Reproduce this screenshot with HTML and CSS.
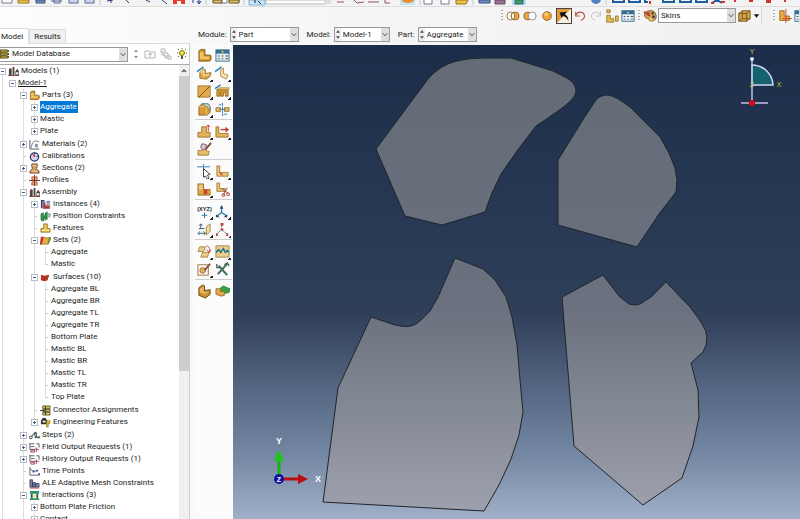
FILE: index.html
```html
<!DOCTYPE html>
<html lang="en">
<head>
<meta charset="UTF-8">
<meta name="viewport" content="width=device-width, initial-scale=1.0">
<title>Model Database</title>
<link rel="stylesheet" href="styles.css">
</head>
<body>
<!-- shared icons -->
<svg class="sprite" aria-hidden="true">
    <symbol id="down" viewBox="0 0 8 14"><path d="M1.500 5.500l2.500 3 2.500-3" fill="none" stroke="#555"/></symbol>
    <symbol id="spin" viewBox="0 0 6 14"><path d="M1 5l2-2.500L5 5zM1 9l2 2.500L5 9z" fill="#444"/></symbol>
    <symbol id="part" viewBox="0 0 16 16"><path d="M2 3l2-1.500h4.500v6H14l1 1v4L13 14H2z" fill="#c98c22" stroke="#75500f" stroke-width=".8"/><path d="M3 4h4v5h6v3H3z" fill="#f0c468"/></symbol>
    <symbol id="table" viewBox="0 0 16 16"><rect x="1" y="2" width="14" height="12" fill="#e9f1f6" stroke="#34698c"/><path d="M1 2h14v4H1z" fill="#2f7097"/><path d="M3 8h2v1H3zm4 0h2v1H7zm4 0h3v1h-3zM3 11h2v1H3zm4 0h2v1H7zm4 0h3v1h-3z" fill="#455"/><path d="M7 3h2v2H7z" fill="#f4c14d"/></symbol>
    <symbol id="towers" viewBox="0 0 12 12"><path d="M1 11V3h3v8zM5 11V1h2v10zM8 11V6l2-3 2 3v5z" fill="#4a4442"/><path d="M1 4l2-2 1 3zM0 10h12v1H0z" fill="#a33a32"/><circle cx="10" cy="8" r="1.500" fill="#dfe6dc"/></symbol>
    <symbol id="material" viewBox="0 0 12 12"><path d="M1 1v10h10" fill="none" stroke="#456"/><path d="M2 10l2-6 3-2 4 1" fill="none" stroke="#777"/><path d="M7 5l3 1-1 4-3-2z" fill="#8294a8"/></symbol>
    <symbol id="gauge" viewBox="0 0 12 12"><circle cx="6" cy="6.500" r="4.500" fill="#d8d6f2" stroke="#332e70" stroke-width="1.400"/><path d="M6 7L3 3l4 2z" fill="#c02828"/><path d="M6 1v3M8 6h2" stroke="#1c6c70"/></symbol>
    <symbol id="section" viewBox="0 0 12 12"><path d="M3 1h6v3L8 6l3 3v2H1V9l3-3-1-2z" fill="#cd9e61" stroke="#7e4b27"/><path d="M4 3h4M3 9h6" stroke="#f1d6a5"/></symbol>
    <symbol id="profile" viewBox="0 0 12 12"><path d="M3 2h6v3H8v3h1v3H3V8h1V5H3z" fill="#eb9974" stroke="#a24d34" stroke-width=".7"/><path d="M0 6h12M6 0v12" stroke="#6b3427"/></symbol>
    <symbol id="instances" viewBox="0 0 12 12"><path d="M1 1h4v5h6v4H1z" fill="#27457d"/><path d="M3 3h3v4h5v4H3z" fill="#b03a3a" stroke="#fff" stroke-width=".5"/><path d="M7 2h4v3H7z" fill="#7694c0"/></symbol>
    <symbol id="position" viewBox="0 0 12 12"><path d="M1 10V3l3-1v6l2-6 2-1v8L6 10V6l-2 5z" fill="#2b9149" stroke="#17592c" stroke-width=".5"/><path d="M9 2l3 1-1 4H9z" fill="#8ca9b0"/></symbol>
    <symbol id="feature" viewBox="0 0 12 12"><path d="M4 1h4v5h3v4H1V6h3z" fill="#e9c95c" stroke="#816317" stroke-width=".8"/><path d="M2 8h8" stroke="#fff2ae"/></symbol>
    <symbol id="set" viewBox="0 0 12 12"><path d="M3 3h9l-3 7H0z" fill="#e8ad46" stroke="#925c18" stroke-width=".7"/><path d="M1 2h3l-2 8H0z" fill="#c22b22"/><path d="M10 2l2 1-3 7H8z" fill="#489c42"/></symbol>
    <symbol id="surface" viewBox="0 0 12 12"><path d="M1 3l4 1 5-1-2 6-3 1-4-1z" fill="#c02b20"/><path d="M7 4l3-1-2 6H6z" fill="#8c4b24"/></symbol>
    <symbol id="connector" viewBox="0 0 12 12"><path d="M3 1h8v3H3zM3 5h8v2H3zM3 8h8v3H3z" fill="#d2c55d" stroke="#45401d" stroke-width=".8"/><path d="M0 6h5M6 1v10" stroke="#333"/></symbol>
    <symbol id="engineering" viewBox="0 0 12 12"><path d="M1 8V4l2-3h3l2 3v4z" fill="#333"/><path d="M3 4h3v2H3z" fill="#eee"/><path d="M7 4h4v3H9v4H7z" fill="#dfbb26" stroke="#655617" stroke-width=".5"/></symbol>
    <symbol id="steps" viewBox="0 0 12 12"><circle cx="2" cy="8" r="1.500" fill="#fff" stroke="#333"/><path d="M3 7l3-4h2v5h4M6 3l1 6" fill="none" stroke="#333"/><circle cx="7" cy="3" r="1" fill="#2f7a55"/><path d="M8 7h4v2H8z" fill="#357a58"/></symbol>
    <symbol id="output" viewBox="0 0 12 12"><path d="M1 1v7h6M1 2h5M2 5h4M8 2h3v4" fill="none" stroke="#50545c"/><path d="M2 9h4v2H2zM7 8h4M8 6v5" fill="none" stroke="#a54149"/></symbol>
    <symbol id="times" viewBox="0 0 12 12"><path d="M1 1v9h10M1 3l4 3 4-1" fill="none" stroke="#555b68"/><path d="M4 5h2v2H4zM8 4h2v2H8zM10 8h2v2h-2z" fill="#36559b"/></symbol>
    <symbol id="ale" viewBox="0 0 12 12"><path d="M1 2h3v8H1zM4 5h3v5H4zM7 6h4v4H7z" fill="#7682a3" stroke="#343a58" stroke-width=".8"/><path d="M1 11h10" stroke="#b34950"/></symbol>
    <symbol id="interaction" viewBox="0 0 12 12"><path d="M1 1h10v3H1zM1 9h10v2H1z" fill="#2b8f69"/><path d="M3 4v5M9 4v5" stroke="#2e5d52" stroke-width="2"/><path d="M5 5h2v3H5z" fill="#ead45e"/></symbol>
    <symbol id="cube" viewBox="0 0 16 16"><path d="M2 5l4-3h9v9l-4 3H2z" fill="#cfa54f" stroke="#765216"/><path d="M2 5h9v9M11 5l4-3M6 2v9h9M2 14l4-3" fill="none" stroke="#765216"/></symbol>
    <symbol id="solid" viewBox="0 0 16 16"><path d="M3 7l4-4 2 1v4l6-1-1 4-4 3-7-1z" fill="#daa64a" stroke="#8e641e" stroke-width=".8"/><path d="M4 7l3-2v5l6-1" fill="none" stroke="#f7d68c" stroke-width="1.500"/><path d="M0 6l7-5" stroke="#2780b6" stroke-width="1.500"/></symbol>
    <symbol id="shell" viewBox="0 0 16 16"><path d="M6 4l3-2v6l5 2-2 4-6-3z" fill="#f3dfb4" stroke="#a3792e" stroke-width=".8"/><path d="M0 6l7-5" stroke="#2780b6" stroke-width="1.500"/></symbol>
    <symbol id="wire" viewBox="0 0 16 16"><rect x="1" y="2" width="13" height="12" fill="#e2ad4e" stroke="#8e641e" stroke-width=".8"/><path d="M2 14L14 2" stroke="#7a5013"/></symbol>
    <symbol id="fence" viewBox="0 0 16 16"><path d="M2 6h12v7h-3V9H9v4H6V9H5v4H2z" fill="#d69c3b" stroke="#8a5c12" stroke-width=".8"/><path d="M2 6l3-2h10l-1 2z" fill="#f1cc7d" stroke="#8a5c12" stroke-width=".6"/><path d="M0 5l6-4" stroke="#2780b6" stroke-width="1.500"/></symbol>
    <symbol id="blend" viewBox="0 0 16 16"><path d="M2 5l3-3h7l2 3v6l-3 3H2z" fill="#d89b35" stroke="#7b5820" stroke-width=".8"/><path d="M2 5h8v9" fill="none" stroke="#f2cb77"/><path d="M5 2h7l2 3v4c-1-3-3-4-6-5z" fill="#eed39b" stroke="#2d7ba5" stroke-width=".8"/></symbol>
    <symbol id="mirror" viewBox="0 0 16 16"><path d="M1 6h5v4H1zM10 6h5v4h-5z" fill="#e2b463" stroke="#91631f" stroke-width=".8"/><path d="M8 1v14" stroke="#2380b0" stroke-dasharray="3 1"/><path d="M4 3h3M9 13h4M5 8h6" stroke="#2380b0"/></symbol>
    <symbol id="height" viewBox="0 0 16 16"><path d="M5 3h5v6h4v5H1V9h4z" fill="#e1b458" stroke="#8c641c" stroke-width=".8"/><path d="M12 1v7M10 3l2-2 2 2" fill="none" stroke="#c92c25"/></symbol>
    <symbol id="move" viewBox="0 0 16 16"><path d="M1 3h3v7h10v4H1z" fill="#e1b458" stroke="#8c641c" stroke-width=".8"/><path d="M6 6h5" stroke="#cc3930" stroke-width="1.500"/><path d="M11 3l4 3-4 3z" fill="#cc3930"/></symbol>
    <symbol id="query" viewBox="0 0 16 16"><path d="M5 2l5 1-1 6 4 1-1 4H1V9h5z" fill="#e7bf6a" stroke="#91672a" stroke-width=".8"/><circle cx="7" cy="5" r="3" fill="#dac4dc" stroke="#825f87"/><path d="M15 1l-6 7" stroke="#7b4e3b" stroke-width="2"/></symbol>
    <symbol id="pick" viewBox="0 0 16 16"><path d="M0 3h14M7 0v7" stroke="#3683b3"/><path d="M7 5l7 6-3 1 2 3-2 1-2-3-2 1z" fill="#fff" stroke="#333"/></symbol>
    <symbol id="ledge" viewBox="0 0 16 16"><path d="M2 2h3v7h9v4H2z" fill="#e9c373" stroke="#986d26" stroke-width=".8"/><path d="M5 9l3 3" stroke="#c73930" stroke-width="1.200"/></symbol>
    <symbol id="cells" viewBox="0 0 16 16"><path d="M1 2h6v6h7v6H1z" fill="#dba649" stroke="#8c611a" stroke-width=".8"/><path d="M7 8h4v5H7z" fill="#c64337"/><path d="M2 3h4v5H2z" fill="#efcb7e"/></symbol>
    <symbol id="cut" viewBox="0 0 16 16"><path d="M2 1h3v6h6v3H2z" fill="#e9c373" stroke="#986d26" stroke-width=".8"/><path d="M7 7l7 5M13 6l-4 8" stroke="#894942"/><circle cx="14" cy="13" r="1.500" fill="none" stroke="#bc3934"/><circle cx="9" cy="14" r="1.500" fill="none" stroke="#bc3934"/></symbol>
    <symbol id="axes" viewBox="0 0 16 16"><path d="M7 2v7l-5 4M7 9l6 4" fill="none" stroke="#2473a6" stroke-width="1.300"/><path d="M5 5l2-4 2 4zM1 11v3h4zM13 11v3h-4z" fill="#254e73"/></symbol>
    <symbol id="plane" viewBox="0 0 16 16"><path d="M10 5l4-3v8l-4 4z" fill="#f0dba4" stroke="#946e2c" stroke-width=".8"/><path d="M2 7h6M2 12h7M4 2v5M2 4l2-2 2 2M3 10l-2 2 2 2M7 10l2 2-2 2" fill="none" stroke="#345a70"/></symbol>
    <symbol id="csys" viewBox="0 0 16 16"><path d="M7 2v6l-5 5M7 8l6 5" fill="none" stroke="#2d7aaa" stroke-dasharray="3 1"/><path d="M6 1h3v3H6zM1 12h2v3H1zM12 12h2v3h-2zM6 7h3v2H6z" fill="#bf4038"/></symbol>
    <symbol id="rotate" viewBox="0 0 16 16"><path d="M3 3h6L7 8H1zM6 9h7l-2 5H4z" fill="#edcf8b" stroke="#927027" stroke-width=".8"/><path d="M10 2c4 1 4 4 3 7M10 6l3 3 2-3" fill="none" stroke="#b83a32"/></symbol>
    <symbol id="wave" viewBox="0 0 16 16"><rect x="1" y="2" width="14" height="12" fill="#edcf8b" stroke="#946e2c" stroke-width=".8"/><path d="M1 9l3-3 2 3 3-4 2 4 2-2 2 2" fill="none" stroke="#197090" stroke-width="1.500"/></symbol>
    <symbol id="sketch" viewBox="0 0 16 16"><rect x="1" y="3" width="11" height="11" fill="#fff" stroke="#937130"/><circle cx="6" cy="9" r="3" fill="#ddb16a" stroke="#9f6c28"/><path d="M14 2L8 9" stroke="#9a4939" stroke-width="2"/></symbol>
    <symbol id="tools" viewBox="0 0 16 16"><path d="M4 4l9 10M13 2L3 13" stroke="#3c6b61" stroke-width="2"/><path d="M2 2v4h4M10 3l3-2 2 3" fill="none" stroke="#4d615e" stroke-width="1.500"/></symbol>
    <symbol id="block" viewBox="0 0 16 16"><path d="M2 4l4-3 2 1v5l6-1v5l-5 4-7-3z" fill="#c88f31" stroke="#694617"/><path d="M3 5l4-2v6l6-1-4 3-6-2z" fill="#e9ba60"/></symbol>
    <symbol id="merge" viewBox="0 0 16 16"><path d="M6 4l3-2 4 2 3 1-1 4-5 1-4-2z" fill="#3ca345" stroke="#28722e" stroke-width=".8"/><path d="M1 5h5v3h4v4l-3 1-6-2z" fill="#dda94c" stroke="#8d5d20" stroke-width=".8"/></symbol>
</svg>

<div class="app">
    <!-- lower edge of the main toolbar -->
    <header class="main-toolbar">
        <svg width="800" height="7" viewBox="0 0 800 7" aria-hidden="true">
            <path d="M2 0v3h10V0M220 0v3h7V0M229 2h10V0M424 0v4h8V0M441 0v4h8V0" fill="#fff" stroke="#777b91"/>
            <path d="M18 0h11v3H18zM456 0h12l-2 4h-10z" fill="#edc248" stroke="#9b7629"/>
            <path d="M36 0h9v3h-9zM479 0h11v3h-11z" fill="#738dbe" stroke="#38507e"/>
            <path d="M51 1h11M54 0v3h6V0" fill="none" stroke="#59698e"/>
            <path d="M69 0v3h9V0M85 0v3h9V0" fill="#cbd7e8" stroke="#5e6688"/>
            <path d="M107 1l6-1M111 0v3M126 0l3 3M146 0l4 2M162 0l5 4" fill="none" stroke="#263c79"/>
            <path d="M173 0h12v4h-12z" fill="#e63c2f"/><path d="M177 1h4v3h-4z" fill="#fff"/>
            <path d="M193 0v3M199 0v3M197 1l2 3 2-3" stroke="#20318d" fill="none"/>
            <path d="M213 0h9v3h-9zM229 0h10v3h-10z" fill="#e1c365" stroke="#635326"/>
            <path d="M249 0h16v5h-16z" fill="#c9e5f7" stroke="#78b6db"/><path d="M255 0v3M258 1l3 3" stroke="#222"/>
            <path d="M266 0h59v4h-59z" fill="#fff" stroke="#bbb"/><path d="M325 0h6v4h-6z" fill="#ddd"/>
            <path d="M337 2h7M354 0l3 3 7-1M368 2h11M385 0v3h5" fill="none" stroke="#9d5050"/>
            <path d="M400 0h15v5h-15z" fill="#c7e3f6"/><ellipse cx="408" cy="0" rx="6" ry="3" fill="#e99029"/>
            <path d="M495 0h10v4h-10z" fill="#9b718d" stroke="#684b6d"/><path d="M512 0h14v5h-14z" fill="#b7dcf2"/><path d="M515 0h8v4h-8z" fill="#3fa15a" stroke="#395c79"/>
            <circle cx="596" cy="-1" r="5" fill="#4f80bd"/>
            <path d="M613 0v2h11V0M629 0v2h11V0M645 0v2h3M663 0v2h11V0M680 0v2h11V0M696 0v2h11V0M712 3l5-3 5 3" fill="none" stroke="#1f5da2" stroke-width="2"/>
            <path d="M650 1v3M711 3h3M721 2h4M735 0v2M749 1h4M766 0h4v2h-4M785 0v2" fill="none" stroke="#d2332f" stroke-width="2"/>
            <path d="M100 0v5M206 0v5M244 0v5M420 0v5M473 0v5M606 0v5" stroke="#c8c8c8"/>
        </svg>
    </header>

    <div class="toolbar-row">
        <div class="toolbar">
            <i class="grip"></i>
            <button class="tool wide" aria-label="Replace"><svg viewBox="0 0 16 16"><circle cx="5.500" cy="8" r="4.500" fill="#fff" stroke="#816b52"/><circle cx="10.500" cy="8" r="4.500" fill="#ecaa3e" stroke="#8e6023"/><path d="M8 4a5 5 0 0 1 0 8 5 5 0 0 1 0-8" fill="#fff" stroke="#8e6023"/></svg></button>
            <button class="tool wide" aria-label="Remove"><svg viewBox="0 0 16 16"><circle cx="5.500" cy="8" r="4.500" fill="#ecaa3e" stroke="#8e6023"/><circle cx="10.500" cy="8" r="4.500" fill="#fff" stroke="#888"/></svg></button>
            <button class="tool wide" aria-label="All"><svg viewBox="0 0 16 16"><circle cx="8" cy="8" r="5" fill="#eda43a" stroke="#8e6023"/><circle cx="7" cy="6" r="2" fill="#f7cf82"/></svg></button>
            <button class="tool active" aria-label="Select"><svg viewBox="0 0 16 16"><path d="M0 0h16L0 16z" fill="#e29b35"/><path d="M16 0v16H0z" fill="#f7efe2"/><path d="M3 4l8-1-2 3c3 2 4 4 4 8-1-3-3-5-6-6l-2 2z" fill="#141414"/></svg></button>
            <button class="tool" aria-label="Undo"><svg viewBox="0 0 16 16"><path d="M3 3v5h5M3 7c3-5 9-4 10 0s-2 5-4 6" fill="none" stroke="#b95b4c" stroke-width="1.300"/></svg></button>
            <button class="tool" aria-label="Redo"><svg viewBox="0 0 16 16"><path d="M13 3v5H8M13 7C10 2 4 3 3 7s2 5 4 6" fill="none" stroke="#bbb"/></svg></button>
            <button class="tool" aria-label="Parts"><svg viewBox="0 0 16 16"><path d="M2 1h4v3H2zM2 7h4v4h4v4H2zM12 8h3v6h-3z" fill="#e6b94e" stroke="#9a762e"/></svg></button>
            <button class="tool" aria-label="Display groups"><svg viewBox="0 0 16 16"><use href="#table"/></svg></button>
            <i class="grip"></i>
            <button class="tool" aria-label="Colours"><svg viewBox="0 0 16 16"><path d="M8 2c5-1 7 3 7 7s-5 6-8 4c1-3-4-1-5-5s2-6 6-6z" fill="#d9a35b" stroke="#785020"/><circle cx="6" cy="5" r="1.500" fill="#c7302e"/><circle cx="11" cy="5" r="1.500" fill="#2a5d35"/><circle cx="12" cy="9" r="1.500" fill="#263852"/><circle cx="9" cy="12" r="1.500" fill="#f2d34f"/><path d="M1 3l7 5" stroke="#b33c2d" stroke-width="2"/></svg></button>
            <span class="combo skins"><select aria-label="Color code"><option>Skins</option></select><svg class="down"><use href="#down"/></svg></span>
            <button class="tool" aria-label="Render style"><svg viewBox="0 0 16 16"><use href="#cube"/></svg></button>
            <button class="tool caret" aria-label="More styles"><svg viewBox="0 0 8 16"><path d="M1 6h6l-3 4z" fill="#111"/></svg></button>
        </div>
        <div class="toolbar">
            <i class="grip"></i>
            <button class="tool" aria-label="Partition"><svg viewBox="0 0 16 16"><path d="M2 2h5v6h6v5H2z" fill="#e7ae3d" stroke="#9b6c22"/><path d="M9 0v16M5 11h11" stroke="#c43d37"/></svg></button>
            <button class="tool" aria-label="Options"><svg viewBox="0 0 16 16"><use href="#table"/></svg></button>
        </div>
    </div>

    <div class="workspace">
        <aside class="sidebar">
            <div class="tabs">
                <button class="tab selected">Model</button>
                <button class="tab">Results</button>
            </div>
            <div class="database">
                <span class="combo">
                    <svg class="db-icon" viewBox="0 0 10 12"><path d="M0 2h7l2 1-2 1H0zM0 5h7l2 1-2 1H0zM0 8h7l2 1-2 1H0z" fill="#efd447" stroke="#40380e"/></svg>
                    <select aria-label="Database"><option>Model Database</option></select>
                    <svg class="down"><use href="#down"/></svg>
                </span>
                <svg class="db-spin"><use href="#spin"/></svg>
                <button class="db-tool" aria-label="Up"><svg viewBox="0 0 12 12"><path d="M1 3h4l1 1h5v6H1zM6 9V5M4 7l2-2 2 2" fill="none" stroke="#b3b3b3"/></svg></button>
                <button class="db-tool" aria-label="Filter"><svg viewBox="0 0 12 12"><path d="M1 1h4v3H1zM4 5h4v3H4zM8 8h3v3H8zM2 4v3h2M5 8v2h3" fill="none" stroke="#b3b3b3"/></svg></button>
                <button class="db-tool" aria-label="Tips"><svg viewBox="0 0 12 12"><circle cx="6" cy="5" r="2.500" fill="#efe33c" stroke="#77751e"/><path d="M5 8h2v3H5z" fill="#3d5b3b"/><path d="M6 0v1M1 5h1M10 5h1M2 1l1 1M10 1L9 2M2 9l1-1M10 9L9 8" stroke="#62752a"/></svg></button>
            </div>
            <div class="tree-pane">
                <ul class="tree">
                    <li><div class="row"><button class="box" aria-label="Collapse"></button><svg><use href="#towers"/></svg>Models (1)</div>
                    <ul class="plain">
                        <li><div class="row"><button class="box" aria-label="Collapse"></button><u>Model-1</u></div>
                        <ul>
                            <li><div class="row"><button class="box" aria-label="Collapse"></button><svg viewBox="0 0 16 16"><use href="#part"/></svg>Parts (3)</div>
                            <ul>
                                <li class="row"><button class="box plus" aria-label="Expand"></button><span class="picked">Aggregate</span></li>
                                <li class="row"><button class="box plus" aria-label="Expand"></button>Mastic</li>
                                <li class="row"><button class="box plus" aria-label="Expand"></button>Plate</li>
                            </ul></li>
                            <li class="row"><button class="box plus" aria-label="Expand"></button><svg><use href="#material"/></svg>Materials (2)</li>
                            <li class="row"><i class="stub"></i><svg><use href="#gauge"/></svg>Calibrations</li>
                            <li class="row"><button class="box plus" aria-label="Expand"></button><svg><use href="#section"/></svg>Sections (2)</li>
                            <li class="row"><i class="stub"></i><svg><use href="#profile"/></svg>Profiles</li>
                            <li><div class="row"><button class="box" aria-label="Collapse"></button><svg><use href="#towers"/></svg>Assembly</div>
                            <ul>
                                <li class="row"><button class="box plus" aria-label="Expand"></button><svg><use href="#instances"/></svg>Instances (4)</li>
                                <li class="row"><i class="stub"></i><svg><use href="#position"/></svg>Position Constraints</li>
                                <li class="row"><i class="stub"></i><svg><use href="#feature"/></svg>Features</li>
                                <li><div class="row"><button class="box" aria-label="Collapse"></button><svg><use href="#set"/></svg>Sets (2)</div>
                                <ul>
                                    <li class="row"><i class="stub"></i>Aggregate</li>
                                    <li class="row"><i class="stub"></i>Mastic</li>
                                </ul></li>
                                <li><div class="row"><button class="box" aria-label="Collapse"></button><svg><use href="#surface"/></svg>Surfaces (10)</div>
                                <ul>
                                    <li class="row"><i class="stub"></i>Aggregate BL</li>
                                    <li class="row"><i class="stub"></i>Aggregate BR</li>
                                    <li class="row"><i class="stub"></i>Aggregate TL</li>
                                    <li class="row"><i class="stub"></i>Aggregate TR</li>
                                    <li class="row"><i class="stub"></i>Bottom Plate</li>
                                    <li class="row"><i class="stub"></i>Mastic BL</li>
                                    <li class="row"><i class="stub"></i>Mastic BR</li>
                                    <li class="row"><i class="stub"></i>Mastic TL</li>
                                    <li class="row"><i class="stub"></i>Mastic TR</li>
                                    <li class="row"><i class="stub"></i>Top Plate</li>
                                </ul></li>
                                <li class="row"><i class="stub"></i><svg><use href="#connector"/></svg>Connector Assignments</li>
                                <li class="row"><button class="box plus" aria-label="Expand"></button><svg><use href="#engineering"/></svg>Engineering Features</li>
                            </ul></li>
                            <li class="row"><button class="box plus" aria-label="Expand"></button><svg><use href="#steps"/></svg>Steps (2)</li>
                            <li class="row"><button class="box plus" aria-label="Expand"></button><svg><use href="#output"/></svg>Field Output Requests (1)</li>
                            <li class="row"><button class="box plus" aria-label="Expand"></button><svg><use href="#output"/></svg>History Output Requests (1)</li>
                            <li class="row"><i class="stub"></i><svg><use href="#times"/></svg>Time Points</li>
                            <li class="row"><i class="stub"></i><svg><use href="#ale"/></svg>ALE Adaptive Mesh Constraints</li>
                            <li><div class="row"><button class="box" aria-label="Collapse"></button><svg><use href="#interaction"/></svg>Interactions (3)</div>
                            <ul>
                                <li class="row"><button class="box plus" aria-label="Expand"></button>Bottom Plate Friction</li>
                                <li class="row"><button class="box plus" aria-label="Expand"></button>Contact</li>
                            </ul></li>
                        </ul></li>
                    </ul></li>
                </ul>
                <div class="scrollbar">
                    <svg viewBox="0 0 10 11"><path d="M3 7l2-2 2 2" fill="none" stroke="#444" stroke-width="1.200"/></svg>
                    <div class="thumb"></div>
                </div>
            </div>
        </aside>

        <main class="module">
            <div class="context">
                <label for="module">Module:</label>
                <span class="combo module-combo"><svg class="spin"><use href="#spin"/></svg><select id="module"><option>Part</option></select><svg class="down"><use href="#down"/></svg></span>
                <label for="model">Model:</label>
                <span class="combo model-combo"><svg class="spin"><use href="#spin"/></svg><select id="model"><option>Model-1</option></select><svg class="down"><use href="#down"/></svg></span>
                <label for="part-name">Part:</label>
                <span class="combo part-combo"><svg class="spin"><use href="#spin"/></svg><select id="part-name"><option>Aggregate</option></select><svg class="down"><use href="#down"/></svg></span>
            </div>
            <div class="stage">
                <nav class="toolbox">
                    <div class="group">
                        <button aria-label="Create part"><svg viewBox="0 0 16 16"><use href="#part"/></svg></button>
                        <button aria-label="Part manager"><svg viewBox="0 0 16 16"><use href="#table"/></svg></button>
                        <button class="more" aria-label="Solid"><svg viewBox="0 0 16 16"><use href="#solid"/></svg></button>
                        <button class="more" aria-label="Shell"><svg viewBox="0 0 16 16"><use href="#shell"/></svg></button>
                        <button class="more" aria-label="Wire"><svg viewBox="0 0 16 16"><use href="#wire"/></svg></button>
                        <button class="more" aria-label="Extrude cut"><svg viewBox="0 0 16 16"><use href="#fence"/></svg></button>
                        <button class="more" aria-label="Blend"><svg viewBox="0 0 16 16"><use href="#blend"/></svg></button>
                        <button aria-label="Mirror"><svg viewBox="0 0 16 16"><use href="#mirror"/></svg></button>
                    </div>
                    <div class="group">
                        <button class="more" aria-label="Edit feature"><svg viewBox="0 0 16 16"><use href="#height"/></svg></button>
                        <button class="more" aria-label="Move feature"><svg viewBox="0 0 16 16"><use href="#move"/></svg></button>
                        <button aria-label="Query"><svg viewBox="0 0 16 16"><use href="#query"/></svg></button>
                    </div>
                    <div class="group">
                        <button class="more" aria-label="Partition edge"><svg viewBox="0 0 16 16"><use href="#pick"/></svg></button>
                        <button class="more" aria-label="Partition face"><svg viewBox="0 0 16 16"><use href="#ledge"/></svg></button>
                        <button class="more" aria-label="Partition cell"><svg viewBox="0 0 16 16"><use href="#cells"/></svg></button>
                        <button aria-label="Remove faces"><svg viewBox="0 0 16 16"><use href="#cut"/></svg></button>
                    </div>
                    <div class="group">
                        <button class="more" aria-label="Datum point"><svg viewBox="0 0 16 16"><text x="8" y="7" class="xyz">(XYZ)</text><path d="M8 9v6M5 12h6" stroke="#2473a6"/></svg></button>
                        <button class="more" aria-label="Datum axis"><svg viewBox="0 0 16 16"><use href="#axes"/></svg></button>
                        <button class="more" aria-label="Datum plane"><svg viewBox="0 0 16 16"><use href="#plane"/></svg></button>
                        <button class="more" aria-label="Datum system"><svg viewBox="0 0 16 16"><use href="#csys"/></svg></button>
                    </div>
                    <div class="group">
                        <button class="more" aria-label="Convert"><svg viewBox="0 0 16 16"><use href="#rotate"/></svg></button>
                        <button class="more" aria-label="Midsurface"><svg viewBox="0 0 16 16"><use href="#wave"/></svg></button>
                        <button class="more" aria-label="Sketch"><svg viewBox="0 0 16 16"><use href="#sketch"/></svg></button>
                        <button aria-label="Repair"><svg viewBox="0 0 16 16"><use href="#tools"/></svg></button>
                    </div>
                    <div class="group">
                        <button aria-label="Assign"><svg viewBox="0 0 16 16"><use href="#block"/></svg></button>
                        <button aria-label="Merge"><svg viewBox="0 0 16 16"><use href="#merge"/></svg></button>
                    </div>
                </nav>
                <div class="viewport">
                    <svg viewBox="0 0 567 474" preserveAspectRatio="xMinYMin slice">
                        <defs>
                            <linearGradient id="metal" gradientUnits="userSpaceOnUse" x1="0" y1="0" x2="0" y2="474">
                                <stop offset="0" stop-color="#636b77"/>
                                <stop offset=".56" stop-color="#6b717e"/>
                                <stop offset="1" stop-color="#9fa3af"/>
                            </linearGradient>
                        </defs>
                        <g class="aggregate" fill="url(#metal)">
                            <path d="M143 104L195 34Q207 20 224 16Q236 13 250 13H278L320 26L334 33Q342 38 343 45Q343 52 334 59Q330 63 303 81Q284 105 268 129Q258 148 252 167L209 180L172 171Z"/>
                            <path d="M325 115L351 73L363 55Q367 50 375 50Q383 51 398 63L427 92L436 108L442 123L444 135L443 147L426 169L404 202L325 180Z"/>
                            <path d="M222 213L250 224L262 235L273 252L279 272L284 300L287 335L290 367L286 390L278 414L266 440L251 466L90 457L105 343L138 272L162 280Q175 283 181 280T197 266L205 252Z"/>
                            <path d="M370 230L386 251L396 259Q402 261 407 259L418 252L433 237L457 262L468 277Q474 286 474 293T470 307L458 318L465 345L466 372L460 401L449 433L410 460L341 401L329 252Z"/>
                        </g>
                        <!-- view compass -->
                        <path d="M519 20A21 21 0 0 1 540 40H519z" fill="#14626e" stroke="#cfd5fa" stroke-width="1.500"/>
                        <path d="M519 14v44M508 58h27" stroke="#c3b9ea" stroke-width="1.500"/>
                        <circle cx="519" cy="14" r="2" fill="#dfe3ff"/>
                        <circle cx="519" cy="58" r="3" fill="#d40a12"/>
                        <text class="compass" x="519" y="9">Y</text>
                        <text class="compass" x="546" y="42">X</text>
                        <text class="compass" x="519" y="42">Z</text>
                        <!-- coordinate triad -->
                        <path d="M46 434v-20" stroke="#12b512" stroke-width="3"/>
                        <path d="M41 416l5-11 5 11z" fill="#18c918"/>
                        <path d="M46 434h20" stroke="#b80e12" stroke-width="3"/>
                        <path d="M65 429l10 5-10 5z" fill="#b80e12"/>
                        <circle cx="46" cy="434" r="5" fill="#1010a4"/>
                        <text class="triad" x="46" y="399">Y</text>
                        <text class="triad" x="85" y="437">X</text>
                        <text class="triad small" x="46" y="437">Z</text>
                    </svg>
                </div>
            </div>
        </main>
    </div>
</div>
</body>
</html>
```

FILE: styles.css
```css
* {
    box-sizing: border-box;
}

body {
    margin: 0;
    overflow: hidden;
    font: 8px/12px Roboto, "Open Sans", sans-serif;
    color: #1c1c1c;
    background: #f8f8f8;
}

button,
select {
    margin: 0;
    padding: 0;
    border: 0;
    background: none;
    font: inherit;
    color: inherit;
}

svg {
    display: block;
    flex: none;
}

ul {
    margin: 0;
    padding: 0;
    list-style: none;
}

.sprite {
    display: none;
}

.app {
    display: flex;
    flex-direction: column;
    height: 100vh;
    background: linear-gradient(to right, #fdfdfd, #f6f6f6 40%, #f0f0f0);
}

/* toolbars */

.main-toolbar {
    flex: none;
    height: 7px;
    overflow: hidden;
    background: #f3f3f3;
    border-bottom: 1px solid #ddd;
}

.toolbar-row {
    display: flex;
    flex: none;
    justify-content: flex-end;
    gap: 9px;
    height: 17px;
}

.toolbar {
    display: flex;
    align-items: center;
    background: #f4f4f4;
    border-right: 1px solid #ddd;
}

.toolbar:last-child {
    width: 29px;
    overflow: hidden;
}

.grip {
    flex: none;
    width: 2px;
    height: 11px;
    margin: 0 2px;
    background: repeating-linear-gradient(#aaa 0 1px, transparent 1px 3px);
}

.tool {
    flex: none;
    width: 16px;
    height: 16px;
    padding: 1px;
}

.tool.wide {
    width: 17px;
}

.tool svg {
    width: 14px;
    height: 14px;
}

.tool.active {
    border: 1px solid #444;
    padding: 0;
}

.tool.caret {
    width: 9px;
}

.tool.caret svg {
    width: 7px;
}

.combo {
    display: flex;
    align-items: center;
    height: 15px;
    background: #fff;
    border: 1px solid #999;
}

.combo select {
    flex: 1;
    min-width: 0;
    height: 13px;
    padding-left: 2px;
    appearance: none;
}

.down {
    width: 8px;
    height: 13px;
    background: #dedede;
}

.spin {
    width: 6px;
    height: 13px;
    background: #eee;
}

.skins {
    width: 78px;
}

/* model tree */

.workspace {
    display: flex;
    flex: 1;
    min-height: 0;
}

.sidebar {
    display: flex;
    flex: none;
    flex-direction: column;
    width: 190px;
    padding-top: 4px;
}

.tabs {
    display: flex;
    align-items: flex-end;
    flex: none;
    height: 16px;
    border-bottom: 1px solid #ddd;
}

.tab {
    height: 14px;
    padding: 0 4px;
    background: #f0f0f0;
    border: 1px solid #ddd;
    border-bottom: 0;
}

.tab.selected {
    height: 16px;
    padding: 0 5px 0 1px;
    margin-bottom: -1px;
    background: #fff;
    border-left: 0;
}

.database {
    display: flex;
    flex: none;
    align-items: center;
    height: 21px;
    background: #fff;
    border-right: 1px solid #ccc;
    border-bottom: 1px solid #aaa;
}

.database .combo {
    width: 128px;
    border-left: 0;
}

.db-icon {
    width: 10px;
    height: 12px;
}

.db-spin {
    flex: none;
    width: 6px;
    height: 14px;
    margin: 0 5px;
    opacity: .6;
}

.db-tool {
    flex: none;
    width: 12px;
    height: 12px;
    margin-right: 4px;
}

.database .combo {
    flex: none;
}

.tree-pane {
    display: flex;
    flex: 1;
    min-height: 0;
    overflow: hidden;
    background: #fff;
    border-right: 1px solid #ccc;
}

.tree {
    flex: 1;
    height: 100%;
    background: linear-gradient(#ddd, #ddd) 2px 6px / 1px 100% no-repeat;
}

.tree ul {
    margin-bottom: 1px;
    padding-left: 11px;
    background: linear-gradient(#ddd, #ddd) 13px 0 / 1px calc(100% - 6px) no-repeat;
}

.tree ul.plain {
    padding-left: 10px;
    background: none;
}

.row {
    display: flex;
    align-items: center;
    height: 12px;
    white-space: nowrap;
}

.row svg {
    width: 11px;
    height: 11px;
    margin-right: 2px;
}

.box {
    flex: none;
    width: 5px;
    height: 5px;
    margin-right: 3px;
    background: linear-gradient(#557, #557) center / 3px 1px no-repeat, #fff;
    outline: 1px solid #b4bcc8;
}

.box.plus {
    background: linear-gradient(#557, #557) center / 3px 1px no-repeat, linear-gradient(#557, #557) center / 1px 3px no-repeat, #fff;
}

.stub {
    flex: none;
    width: 5px;
    height: 1px;
    margin-right: 3px;
    background: linear-gradient(#ccc, #ccc) right / 3px 1px no-repeat;
}

.picked {
    padding: 0 1px 0 0;
    background: #0078d7;
    color: #fff;
}

.scrollbar {
    flex: none;
    width: 10px;
    background: #f0f0f0;
}

.scrollbar svg {
    width: 10px;
    height: 11px;
}

.thumb {
    height: 65%;
    background: #cdcdcd;
}

/* module area */

.module {
    display: flex;
    flex: 1;
    flex-direction: column;
    min-width: 0;
    margin-left: 4px;
}

.context {
    display: flex;
    flex: none;
    align-items: center;
    height: 21px;
    padding-left: 4px;
}

.context label {
    margin-right: 3px;
}

.context .combo {
    margin-right: 8px;
}

.module-combo {
    width: 69px;
}

.model-combo {
    width: 56px;
}

.part-combo {
    width: 59px;
}

.stage {
    display: flex;
    flex: 1;
    min-height: 0;
}

.toolbox {
    flex: none;
    width: 39px;
    padding: 1px 1px 0;
    background: #fbfbfb;
}

.group {
    display: grid;
    grid-template-columns: repeat(2, 18px);
    grid-auto-rows: 18px;
    padding-bottom: 1px;
    margin-bottom: 2px;
    border-bottom: 1px solid #ccc;
}

.group:last-child {
    border-bottom: 0;
}

.group button {
    padding: 1px 2px;
}

.group svg {
    width: 15px;
    height: 15px;
}

.group .more {
    background: linear-gradient(135deg, transparent 50%, #222 50%) right bottom / 3px 3px no-repeat;
}

.xyz {
    font: bold 6px "Liberation Sans", sans-serif;
    text-anchor: middle;
    fill: #222;
}

.viewport {
    flex: 1;
    min-width: 0;
    overflow: hidden;
    background: linear-gradient(#1b2d48, #2b3d57 50%, #303f5a 57%, #536580 72%, #7689a4 87%, #a0b0c9);
}

.viewport svg {
    width: 100%;
    height: 100%;
}

.aggregate {
    stroke: #20242b;
    stroke-width: 1;
}

.compass {
    font: 7px "Liberation Sans", sans-serif;
    text-anchor: middle;
    fill: #c8c832;
}

.triad {
    font: bold 9px "Liberation Sans", sans-serif;
    text-anchor: middle;
    fill: #fff;
}

.triad.small {
    font-size: 7px;
}
```
